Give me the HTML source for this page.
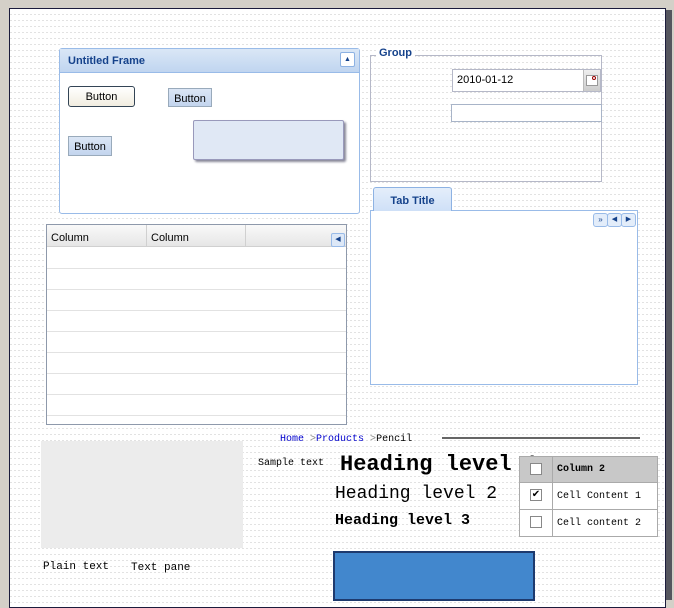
<!DOCTYPE html>
<html><head><meta charset="utf-8"><style>
*{margin:0;padding:0;box-sizing:border-box}
body{width:674px;height:593px;background:#d4d0c8;position:relative;overflow:hidden;font-family:"Liberation Sans",sans-serif;font-size:11px}
.abs{position:absolute}
#canvas{left:9px;top:8px;width:657px;height:600px;border:1px solid #1c1c3c;background-color:#fff;
background-image:repeating-linear-gradient(90deg,transparent 0,transparent 2px,#fff 2px,#fff 4px),repeating-linear-gradient(180deg,#fff 0,#fff 5px,#e2e2e2 5px,#e2e2e2 6px)}
#shadow{left:666px;top:10px;width:6px;height:590px;background:#55565e}
.mono{font-family:"Liberation Mono","DejaVu Sans Mono",monospace}
.btn{border:1px solid #9ab;background:linear-gradient(#dbe6f5,#c3d5ee);font-size:11px;text-align:center;color:#000}
</style></head><body>
<div id="canvas" class="abs"></div>
<div id="shadow" class="abs"></div>

<!-- Frame -->
<div class="abs" style="left:59px;top:48px;width:301px;height:166px;border:1px solid #99bbe8;background:#fff;border-radius:3px"></div>
<div class="abs" style="left:60px;top:49px;width:299px;height:24px;background:linear-gradient(#dae7f6,#c0d5f0);border-bottom:1px solid #99bbe8"></div>
<div class="abs" style="left:68px;top:55px;font-weight:bold;color:#15428b;font-size:11px">Untitled Frame</div>
<div class="abs" style="left:340px;top:52px;width:15px;height:15px;border:1px solid #8db2e3;border-radius:2px;background:#fff;color:#15428b;font-size:7px;text-align:center;line-height:13px">▲</div>
<div class="abs btn" style="left:68px;top:86px;width:67px;height:21px;border:1px solid #345;border-radius:3px;background:linear-gradient(#fff,#f1ede0);line-height:21px">Button</div>
<div class="abs btn" style="left:168px;top:88px;width:44px;height:19px;line-height:20px">Button</div>
<div class="abs btn" style="left:68px;top:136px;width:44px;height:20px;line-height:21px">Button</div>
<div class="abs" style="left:193px;top:120px;width:151px;height:40px;border:1px solid #99b;background:#e0e8f5;border-radius:2px;box-shadow:2px 2px 2px #889"></div>

<!-- Group -->
<div class="abs" style="left:370px;top:55px;width:232px;height:127px;border:1px solid #b5b8c8"></div>
<div class="abs" style="left:376px;top:47px;padding:0 3px;background:#fff;font-weight:bold;color:#15428b">Group</div>
<div class="abs" style="left:452px;top:69px;width:149px;height:23px;border:1px solid #b5b8c8;background:#fff;padding:4px 4px;font-size:11px">2010-01-12</div>
<div class="abs" style="left:583px;top:70px;width:17px;height:21px;background:linear-gradient(#eee,#ccc);border-left:1px solid #bbb"><div style="margin:5px 2px;width:12px;height:11px;border:1px solid #999;background:#fff;position:relative"><div style="position:absolute;right:1px;top:0;width:4px;height:4px;border:1px solid #900;border-radius:50%"></div></div></div>
<div class="abs" style="left:451px;top:104px;width:151px;height:18px;border:1px solid #a8b4c8;background:#fff"></div>

<!-- Tab -->
<div class="abs" style="left:370px;top:210px;width:268px;height:175px;border:1px solid #99bbe8;background:#fff"></div>
<div class="abs" style="left:373px;top:187px;width:79px;height:24px;border:1px solid #8db2e3;border-bottom:none;border-radius:3px 3px 0 0;background:linear-gradient(#e4eefb,#cfe0f7);font-weight:bold;color:#15428b;text-align:center;line-height:26px">Tab Title</div>
<div class="abs" style="left:593px;top:213px;width:15px;height:14px;border:1px solid #99bbe8;border-radius:3px;background:#e3edfa;font-size:8px;color:#15428b;text-align:center;line-height:12px">»</div>
<div class="abs" style="left:607px;top:213px;width:15px;height:14px;border:1px solid #99bbe8;border-radius:3px;background:#e3edfa;font-size:7px;color:#15428b;text-align:center;line-height:12px">◀</div>
<div class="abs" style="left:621px;top:213px;width:15px;height:14px;border:1px solid #99bbe8;border-radius:3px;background:#e3edfa;font-size:7px;color:#15428b;text-align:center;line-height:12px">▶</div>

<!-- Grid -->
<div class="abs" style="left:46px;top:224px;width:301px;height:201px;border:1px solid #8e99ab;background:#fff;
background-image:repeating-linear-gradient(180deg,#fff 0,#fff 20px,#e2e2e2 20px,#e2e2e2 21px);background-position:0 23px;background-repeat:no-repeat;background-size:100% 200px"></div>
<div class="abs" style="left:47px;top:225px;width:299px;height:22px;background:linear-gradient(#f9f9f9,#e6e6e6);border-bottom:1px solid #d0d0d0"></div>
<div class="abs" style="left:51px;top:232px;font-size:11px">Column</div>
<div class="abs" style="left:146px;top:225px;width:1px;height:22px;background:#d0d0d0"></div>
<div class="abs" style="left:151px;top:232px;font-size:11px">Column</div>
<div class="abs" style="left:245px;top:225px;width:1px;height:22px;background:#d0d0d0"></div>
<div class="abs" style="left:331px;top:233px;width:14px;height:14px;border:1px solid #99bbe8;border-radius:2px;background:#dde8f7;font-size:7px;color:#15428b;text-align:center;line-height:12px">◀</div>

<!-- bottom -->
<div class="abs" style="left:41px;top:441px;width:202px;height:107px;background:#ececec"></div>
<div class="abs mono" style="left:280px;top:434px;font-size:10px;color:#000;"><span style="color:#00c">Home</span><span style="color:#888"> &gt;</span><span style="color:#00c">Products</span><span style="color:#888"> &gt;</span>Pencil</div>
<div class="abs" style="left:442px;top:437px;width:198px;height:2px;background:#666"></div>
<div class="abs mono" style="left:258px;top:458px;font-size:10px">Sample text</div>
<div class="abs mono" style="left:340px;top:452px;font-size:22px;font-weight:bold;white-space:nowrap">Heading level 1</div>
<div class="abs mono" style="left:335px;top:484px;font-size:18px;white-space:nowrap">Heading level 2</div>
<div class="abs mono" style="left:335px;top:512px;font-size:15px;font-weight:bold;white-space:nowrap">Heading level 3</div>

<div class="abs" style="left:519px;top:456px;width:139px;height:81px;border:1px solid #aaa;background:#fff"></div>
<div class="abs" style="left:520px;top:457px;width:137px;height:26px;background:#c8c8c8;border-bottom:1px solid #aaa"></div>
<div class="abs" style="left:520px;top:509px;width:137px;height:1px;background:#aaa"></div>
<div class="abs" style="left:552px;top:457px;width:1px;height:79px;background:#aaa"></div>
<div class="abs" style="left:530px;top:463px;width:12px;height:12px;border:1px solid #888;background:#fff"></div>
<div class="abs" style="left:530px;top:489px;width:12px;height:12px;border:1px solid #888;background:#fff;font-size:10px;line-height:10px;text-align:center">✔</div>
<div class="abs" style="left:530px;top:516px;width:12px;height:12px;border:1px solid #888;background:#fff"></div>
<div class="abs mono" style="left:557px;top:464px;font-size:10px;font-weight:bold">Column 2</div>
<div class="abs mono" style="left:557px;top:491px;font-size:10px">Cell Content 1</div>
<div class="abs mono" style="left:557px;top:518px;font-size:10px">Cell content 2</div>

<div class="abs mono" style="left:43px;top:561px;font-size:11px">Plain text</div>
<div class="abs mono" style="left:131px;top:562px;font-size:11px">Text pane</div>
<div class="abs" style="left:333px;top:551px;width:202px;height:50px;background:#4287cd;border:2px solid #1e3a6e"></div>
</body></html>
